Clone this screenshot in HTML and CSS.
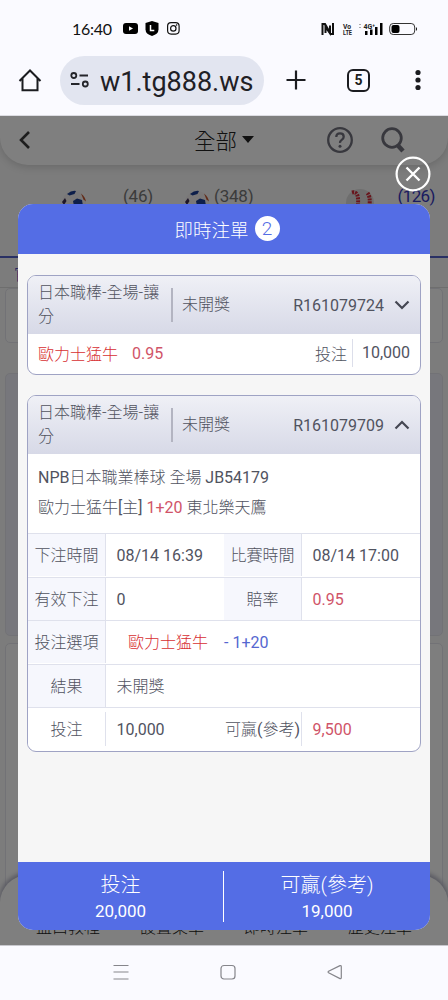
FILE: index.html
```html
<!DOCTYPE html>
<html lang="zh-Hant">
<head>
    <meta charset="UTF-8">
    <meta name="viewport" content="width=device-width, initial-scale=1.0">
    <title>即時注單</title>
    <link rel="stylesheet" href="styles.css">
</head>
<body>
    <div class="phone">
        <div class="status-bar">
            <span class="clock">16:40</span>
            <svg class="status-apps" width="60" height="18" viewBox="0 0 60 18">
                <rect x="1" y="3" width="15" height="11" rx="3"/>
                <path d="M7 6.2v4.6l4-2.3z" fill="#fff"/>
                <path d="M30 1l6.500 2v6.500q0 4.500-6.500 6.500q-6.500-2-6.500-6.500V3z"/>
                <path d="M28.500 5v5.500h3.800" fill="none" stroke="#fff" stroke-width="1.500"/>
                <g fill="none" stroke="#111" stroke-width="1.200">
                    <rect x="45.600" y="2.600" width="11.500" height="11.500" rx="3.500"/>
                    <circle cx="51.300" cy="8.400" r="2.700"/>
                </g>
                <circle cx="54.600" cy="5" r=".8"/>
            </svg>
            <svg class="status-signal" width="100" height="18" viewBox="0 0 100 18">
                <g fill="none" stroke="#111" stroke-width="2">
                    <path d="M2.500 15V4h2.500l5 8.500V5.500"/>
                    <path d="M5.500 13V7l5 7h2.500V3"/>
                </g>
                <text x="23" y="8.500" class="tiny" textLength="8" lengthAdjust="spacingAndGlyphs">Vo</text>
                <text x="23" y="15" class="tiny" textLength="9" lengthAdjust="spacingAndGlyphs">LTE</text>
                <text x="43.500" y="8.500" class="tiny">4G⁺</text>
                <rect x="39" y="4" width="2" height="1" fill="#aaa"/>
                <rect x="39" y="7" width="2" height="1" fill="#aaa"/>
                <rect x="45" y="11" width="2.500" height="4"/>
                <rect x="50" y="9.500" width="2.500" height="5.500"/>
                <rect x="55" y="7" width="2.500" height="8"/>
                <rect x="60" y="3" width="2.500" height="12"/>
                <rect x="69.700" y="3.500" width="25" height="11" rx="3.500" fill="none" stroke="#333"/>
                <rect x="71.500" y="5" width="8" height="8" rx="2"/>
                <path d="M96 7q2 2 0 4z"/>
            </svg>
        </div>

        <div class="browser-bar">
            <svg class="home" width="26" height="26" viewBox="0 0 26 26">
                <path d="M2.500 14L13 3.500 23.500 14M5.500 11.500v11.700h15V11.500" fill="none" stroke="#1b1c20" stroke-width="2"/>
            </svg>
            <div class="address">
                <svg width="20" height="18" viewBox="0 0 20 18" fill="none" stroke="#24252a" stroke-width="1.800">
                    <circle cx="3.800" cy="4.500" r="2.500"/>
                    <path d="M9.500 4.500H18M1 13H9.500"/>
                    <circle cx="15.300" cy="13" r="2.500"/>
                </svg>
                <span>w1.tg888.ws</span>
            </div>
            <svg class="plus" width="22" height="22" viewBox="0 0 22 22">
                <path d="M11 1.500v19M1.500 11h19" stroke="#1b1c20" stroke-width="2.200"/>
            </svg>
            <div class="tab-count">5</div>
            <svg class="dots" width="8" height="24" viewBox="0 0 8 24" fill="#1b1c20">
                <circle cx="4" cy="4.500" r="2.600"/>
                <circle cx="4" cy="12" r="2.600"/>
                <circle cx="4" cy="19.500" r="2.600"/>
            </svg>
        </div>

        <div class="page">
            <div class="page-header">
                <svg class="back" width="14" height="20" viewBox="0 0 14 20">
                    <path d="M10 2L2 10l8 8" fill="none" stroke="#3c3c3c" stroke-width="2.600"/>
                </svg>
                <div class="page-title">全部<i class="caret"></i></div>
                <svg class="help" width="28" height="28" viewBox="0 0 28 28">
                    <circle cx="14" cy="14" r="11.800" fill="none" stroke="#70707c" stroke-width="2.300"/>
                    <path d="M10.300 11q0-3.600 3.700-3.600t3.700 3.300q0 1.800-2 3.200t-1.700 3" fill="none" stroke="#70707c" stroke-width="2.300"/>
                    <circle cx="14" cy="20.300" r="1.500" fill="#70707c"/>
                </svg>
                <svg class="search" width="28" height="28" viewBox="0 0 28 28" fill="none" stroke="#70707c">
                    <circle cx="13" cy="12" r="9.300" stroke-width="2.800"/>
                    <path d="M18.500 19l5.500 6" stroke-width="4.500"/>
                </svg>
            </div>
            <div class="sports">
                <div class="sport">
                    <svg width="26" height="26" viewBox="0 0 26 26">
                        <use href="#soccer"/>
                    </svg>
                    <span>(46)</span>
                </div>
                <div class="sport second">
                    <svg width="26" height="26" viewBox="0 0 26 26">
                        <g id="soccer">
                            <circle cx="13" cy="13" r="12" fill="#f4f0f0"/>
                            <path d="M6 4q5-4 9-3l-1.500 3-5 1.500z" fill="#1c3f94"/>
                            <path d="M12 11l4-2.500 5 1.500 1 6h-9z" fill="#1c3f94"/>
                            <path d="M1 12l3-4 1.500 3L3 15z" fill="#3c2c50"/>
                            <path d="M20 3.500q4 3 5 8l-2.500-2z" fill="#c4552f"/>
                        </g>
                    </svg>
                    <span>(348)</span>
                </div>
                <div class="sport third active">
                    <svg width="30" height="30" viewBox="0 0 30 30">
                        <circle cx="15" cy="15" r="14" fill="#ddd"/>
                        <path d="M7 4.500q7-2 6 12M22.500 5q3 4 2 12" fill="none" stroke="#d12b38" stroke-width="4" stroke-dasharray="2 1"/>
                    </svg>
                    <span>(126)</span>
                </div>
            </div>
            <div class="filter-row">官</div>
            <div class="match small"></div>
            <div class="match tinted"></div>
            <div class="match"></div>
            <div class="bottom-menu">
                <span>盤口教程</span><span>設置菜單</span><span>即時注單</span><span>歷史注單</span>
            </div>
            <div class="backdrop"></div>
        </div>

        <div class="system-nav">
            <svg width="18" height="18" viewBox="0 0 18 18"><path d="M1.500 2.500h15M1.500 9h15M1.500 16h15"/></svg>
            <svg width="18" height="18" viewBox="0 0 18 18"><rect x="2" y="2.500" width="14" height="13.500" rx="3"/></svg>
            <svg width="18" height="18" viewBox="0 0 18 18"><path d="M14 2.600L2.600 8.300q-1 .7 0 1.400L14 15.600q1.300.3 1.300-1V3.700q0-1.400-1.300-1.100z"/></svg>
        </div>

        <svg class="close" width="36" height="36" viewBox="0 0 36 36" fill="none" stroke="#fff">
            <circle cx="18" cy="18" r="16.400" stroke-width="2.200"/>
            <path d="M11.500 11.500l13 13M24.500 11.500l-13 13" stroke-width="2.400"/>
        </svg>

        <div class="modal">
            <div class="modal-title">即時注單 <span class="badge">2</span></div>

            <div class="modal-body">
                <div class="ticket">
                    <div class="ticket-head">
                        <div class="league">日本職棒-全場-讓分</div>
                        <div class="state">未開獎</div>
                        <div class="ticket-no">R161079724</div>
                        <svg width="16" height="10" viewBox="0 0 16 10"><path d="M1.500 1.500L8 8l6.500-6.500"/></svg>
                    </div>
                    <div class="summary">
                        <span class="team">歐力士猛牛</span>
                        <span class="odds num">0.95</span>
                        <span class="stake-label">投注</span>
                        <span class="stake num">10,000</span>
                    </div>
                </div>

                <div class="ticket">
                    <div class="ticket-head">
                        <div class="league">日本職棒-全場-讓分</div>
                        <div class="state">未開獎</div>
                        <div class="ticket-no">R161079709</div>
                        <svg width="16" height="10" viewBox="0 0 16 10"><path d="M1.500 8.500L8 2l6.500 6.500"/></svg>
                    </div>
                    <div class="match-info">
                        <div><span class="num">NPB</span>日本職業棒球 全場 <span class="num">JB54179</span></div>
                        <div>歐力士猛牛<span class="num">[</span>主<span class="num">]</span> <span class="num pink">1+20</span> 東北樂天鷹</div>
                    </div>
                    <div class="row">
                        <div class="label">下注時間</div>
                        <div class="value num">08/14 16:39</div>
                        <div class="label">比賽時間</div>
                        <div class="value num">08/14 17:00</div>
                    </div>
                    <div class="row">
                        <div class="label">有效下注</div>
                        <div class="value num">0</div>
                        <div class="label">賠率</div>
                        <div class="value num pink">0.95</div>
                    </div>
                    <div class="row">
                        <div class="label">投注選項</div>
                        <div class="value wide pick"><span class="team">歐力士猛牛</span><span class="num blue">- 1+20</span></div>
                    </div>
                    <div class="row">
                        <div class="label">結果</div>
                        <div class="value wide">未開獎</div>
                    </div>
                    <div class="row total">
                        <div class="label">投注</div>
                        <div class="value num">10,000</div>
                        <div class="label">可贏<span class="num">(</span>參考<span class="num">)</span></div>
                        <div class="value num pink">9,500</div>
                    </div>
                </div>
            </div>

            <div class="modal-footer">
                <div class="sum"><div class="sum-label">投注</div><div class="sum-value">20,000</div></div>
                <div class="sum"><div class="sum-label">可贏(參考)</div><div class="sum-value">19,000</div></div>
            </div>
        </div>
    </div>
</body>
</html>
```
FILE: styles.css
```css
* {
    box-sizing: border-box;
}

body {
    margin: 0;
    font-family: Roboto, "Noto Sans CJK TC", sans-serif;
    font-size: 16px;
    font-weight: 300;
    color: #51535f;
}

svg {
    display: block;
    flex: none;
}

.phone {
    position: relative;
    width: 448px;
    height: 1000px;
    overflow: hidden;
    background-color: #fafaff;
}

.status-bar {
    display: flex;
    align-items: center;
    height: 56px;
    padding: 2px 28px 0 72px;
}

.clock {
    width: 50px;
    margin-top: -2px;
    font-family: Lato, Roboto, sans-serif;
    font-size: 16px;
    font-weight: 400;
    letter-spacing: -0.3px;
    color: #111;
}

.status-signal {
    margin-left: auto;
}

.tiny {
    font-size: 7px;
    font-weight: 700;
    fill: #222;
}

.browser-bar {
    display: flex;
    align-items: center;
    height: 60px;
    padding: 0 14px 11px 17px;
    border-bottom: 1px solid #dcdce2;
}

.address {
    display: flex;
    align-items: center;
    width: 204px;
    height: 49px;
    margin-left: 17px;
    padding-left: 10px;
    border-radius: 25px;
    background-color: #e2e5f0;
    font-size: 27px;
    font-weight: 400;
    color: #1f2025;
}

.address span {
    margin: 3px 0 0 10px;
    white-space: nowrap;
}

.plus {
    margin-left: 21px;
}

.tab-count {
    width: 23px;
    height: 23px;
    margin-left: 40px;
    border: 2px solid #1b1c20;
    border-radius: 6px;
    font-size: 14px;
    font-weight: 700;
    line-height: 19px;
    text-align: center;
    color: #1b1c20;
}

.dots {
    margin-left: auto;
    margin-right: 12px;
}

/* page behind the dialog */
.page {
    position: relative;
    height: 829px;
    overflow: hidden;
    background-color: #f8f8f8;
}

.backdrop {
    position: absolute;
    inset: 0;
    background-color: rgba(0, 0, 0, 0.5);
}

.page-header {
    display: flex;
    align-items: center;
    height: 49px;
    padding: 0 41px 2px 19px;
    border-radius: 0 0 28px 28px;
    background-color: #fff;
    box-shadow: 0 2px 8px rgba(0, 0, 0, 0.16);
}

.page-title {
    display: flex;
    align-items: center;
    margin-left: 161px;
    font-size: 21.5px;
    color: #222;
}

.caret {
    margin-left: 5px;
    border: 6px solid transparent;
    border-top: 7px solid #222;
    border-bottom: 0;
}

.help {
    margin-left: auto;
}

.search {
    margin-left: 25px;
}

.sports {
    display: flex;
    height: 93px;
    padding: 22px 0 0 61px;
    border-bottom: 2px solid #5260c8;
}

.sport {
    display: flex;
    font-size: 17px;
    font-weight: 400;
    line-height: 20px;
    color: #777;
}

.sport svg {
    margin-top: 3px;
}

.sport span {
    margin: -1px 0 0 36px;
    letter-spacing: -0.2px;
}

.sport.second {
    margin-left: 31px;
}

.sport.second span {
    margin-left: 4px;
}

.sport.third {
    margin-left: 92px;
}

.sport.third svg {
    margin-top: 1px;
}

.sport.third span {
    margin-left: 22px;
    letter-spacing: -0.6px;
}

.sport.active {
    color: #3434be;
}

.filter-row {
    height: 30px;
    padding: 3px 0 0 14px;
    border-bottom: 1px solid #ddd;
    color: #3434be;
}

.match {
    height: 263px;
    margin: 0 5px 7px;
    border: 1px solid #e5e5ec;
    border-radius: 5px;
    background-color: #fcfcfc;
}

.match.small {
    height: 55px;
    margin-bottom: 30px;
}

.match.tinted {
    background-color: #efeff9;
}

.bottom-menu {
    position: absolute;
    left: 0;
    right: 0;
    bottom: 0;
    display: flex;
    justify-content: space-between;
    height: 70px;
    padding: 39px 36px 0;
    border-radius: 28px 28px 0 0;
    background-color: #fff;
    box-shadow: 0 -2px 4px 1px #b5b5c5;
    color: #222;
}

.system-nav {
    display: flex;
    justify-content: center;
    gap: 89px;
    height: 55px;
    padding: 17px 0 0 7px;
    border-top: 1px solid #c8c8ce;
}

.system-nav svg {
    fill: none;
    stroke: #85858b;
    stroke-width: 1.2;
}

/* dialog */
.close {
    position: absolute;
    top: 156px;
    left: 395px;
}

.modal {
    position: absolute;
    top: 204px;
    left: 18px;
    display: flex;
    flex-direction: column;
    width: 412px;
    height: 726px;
    border-radius: 15px;
    background-color: #f6f6f6;
    overflow: hidden;
}

.modal-title {
    display: flex;
    align-items: center;
    justify-content: center;
    gap: 6px;
    height: 50px;
    padding-left: 6px;
    background-color: #546de5;
    font-size: 18.5px;
    color: #fff;
}

.badge {
    width: 25px;
    height: 25px;
    margin-top: -1px;
    border-radius: 50%;
    background-color: #fff;
    font-size: 19px;
    line-height: 26px;
    text-align: center;
    color: #546de5;
}

.modal-body {
    flex: 1;
    padding: 21px 9px 0;
}

.ticket {
    margin-bottom: 20px;
    border: 1px solid #9fa3c4;
    border-radius: 9px;
    background-color: #fff;
    overflow: hidden;
}

.ticket-head {
    display: flex;
    align-items: center;
    height: 58px;
    padding: 0 10px;
    background: linear-gradient(#eff0f6, #d7d9e7);
}

.league {
    width: 133px;
    line-height: 24px;
}

.state {
    height: 34px;
    padding-left: 9px;
    border-left: 2px solid #b3b4c1;
    line-height: 34px;
}

.ticket-no {
    margin-left: auto;
    margin-right: 10px;
    font-weight: 400;
}

.ticket-head path {
    fill: none;
    stroke: #454752;
    stroke-width: 2.2;
}

.summary {
    display: flex;
    align-items: center;
    height: 40px;
    padding: 0 10px 2px;
}

.num {
    font-weight: 400;
}

.team {
    color: #d72f32;
}

.pink,
.odds {
    color: #d05468;
}

.blue {
    color: #5567d0;
}

.odds {
    margin-left: 14px;
}

.stake-label {
    margin-left: auto;
}

.stake {
    margin-left: 5px;
    padding-left: 9px;
    border-left: 1px solid #dcdeea;
    line-height: 28px;
}

.match-info {
    height: 79px;
    padding: 9px 10px 0;
    line-height: 30px;
}

.row {
    display: grid;
    grid-template-columns: 78px 118px 78px 1fr;
    height: 43.6px;
    border-top: 1px solid #dfe1ec;
    line-height: 44px;
}

.label {
    height: 42px;
    border-right: 1px solid #dfe1ec;
    background-color: #f6f7fd;
    text-align: center;
    white-space: nowrap;
}

.value {
    height: 42px;
    padding-left: 10.5px;
}

.wide {
    grid-column: span 3;
}

.pick {
    display: flex;
    gap: 16px;
    padding-left: 22px;
}

.total .label {
    height: 34px;
    margin-top: 4px;
    background-color: #fff;
    line-height: 36px;
}

.modal-footer {
    display: flex;
    height: 68px;
    padding: 9px 0 8px;
    background-color: #546de5;
    color: #fff;
}

.sum {
    width: 205px;
    text-align: center;
}

.sum + .sum {
    width: 207px;
    border-left: 1px solid #fff;
}

.sum-label {
    font-size: 20px;
    line-height: 29px;
}

.sum-value {
    font-size: 17px;
    font-weight: 400;
    line-height: 23px;
}
```
